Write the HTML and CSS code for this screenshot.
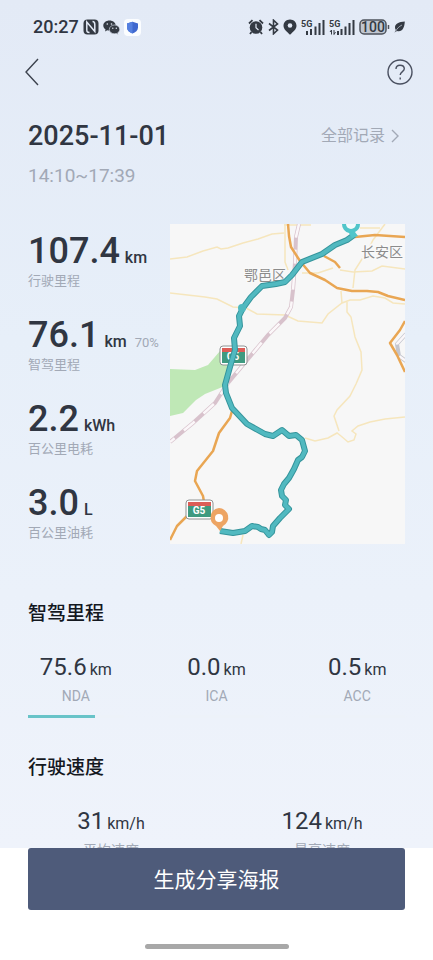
FILE: index.html
```html
<!DOCTYPE html>
<html lang="zh-CN">

<head>
    <meta charset="UTF-8">
    <meta name="viewport" content="width=device-width, initial-scale=1.0">
    <title>行驶记录</title>
    <link rel="stylesheet" href="styles.css">
</head>

<body>
    <main class="page">
        <div class="status-bar">
            <div class="status-left">
                <span class="clock">20:27</span>
                <svg class="nfc" width="16" height="16" viewBox="0 0 16 16">
                    <rect x="0.5" y="0.5" width="15" height="15" rx="4" fill="#343a43" />
                    <path d="M6.500 13.500C4 13.500 3.800 12.500 3.800 10.500V3L11.800 12.500V5.500C11.800 3.500 11.500 2.500 9.500 2.500" fill="none" stroke="#e3eaf6" stroke-width="1.500" />
                </svg>
                <svg class="wechat" width="17" height="15" viewBox="0 0 17 15">
                    <path d="M6.500 0.500C3 0.500 0.300 2.700 0.300 5.500c0 1.600 0.900 3 2.300 3.900L2 11.500l2.300-1.200c0.700 0.200 1.500 0.300 2.200 0.300C10 10.600 12.700 8.300 12.700 5.500S10 0.500 6.500 0.500z" fill="#343a43" />
                    <path d="M11.500 5C8.600 5 6.300 7 6.300 9.400s2.300 4.400 5.200 4.400c0.600 0 1.200-0.100 1.800-0.300l1.900 1-0.500-1.700c1.200-0.800 2-2 2-3.400C16.700 7 14.400 5 11.500 5z" fill="#343a43" stroke="#e3eaf6" stroke-width="0.600" />
                    <g fill="#e3eaf6">
                        <circle cx="4.300" cy="4" r="0.800" />
                        <circle cx="8.500" cy="4" r="0.800" />
                        <circle cx="9.800" cy="8.200" r="0.700" />
                        <circle cx="13.300" cy="8.200" r="0.700" />
                    </g>
                </svg>
                <svg class="shield" width="17" height="17" viewBox="0 0 17 17">
                    <rect width="17" height="17" rx="4" fill="#fbfdff" />
                    <path d="M8.500 2.800L14 4.500V8.500C14 11.500 11.500 13.500 8.500 14.500C5.500 13.500 3 11.500 3 8.500V4.500z" fill="#3f68cf" />
                    <path d="M8.500 2.800V14.500C5.500 13.500 3 11.500 3 8.500V4.500z" fill="#5580e0" />
                </svg>
            </div>
            <div class="status-right">
                <svg width="16" height="16" viewBox="0 0 16 16">
                    <circle cx="8" cy="8.500" r="6.300" fill="#343a43" />
                    <path d="M1 4.500L4.500 1.200M11.500 1.200L15 4.500M3.500 13L2 15M12.500 13L14 15" stroke="#343a43" stroke-width="1.800" />
                    <path d="M8 4.800V8.800L10.500 11" fill="none" stroke="#e3eaf6" stroke-width="1.200" />
                </svg>
                <svg width="11" height="16" viewBox="0 0 11 16">
                    <path d="M1 4.500L9.500 11L5.500 14.800V1.200L9.500 5L1 11.500" fill="none" stroke="#343a43" stroke-width="1.600" />
                </svg>
                <svg width="14" height="16" viewBox="0 0 14 16">
                    <path d="M7 0.500C3.200 0.500 0.500 3.300 0.500 6.700C0.500 10.500 4 12.500 7 15.800C10 12.500 13.500 10.500 13.500 6.700C13.500 3.300 10.800 0.500 7 0.500z" fill="#343a43" />
                    <circle cx="7" cy="6.500" r="2.300" fill="#e3eaf6" />
                </svg>
                <svg class="signal" width="24" height="17" viewBox="0 0 24 17">
                    <text x="0" y="8">5G</text>
                    <path d="M6 16V12M10 16V10M14.500 16V7.500M18.500 16V4M22.500 16V1" />
                </svg>
                <svg class="signal" width="26" height="17" viewBox="0 0 26 17">
                    <text x="0" y="8">5G</text>
                    <path d="M9 16V12M12.500 16V10M16.500 16V7.500M20.500 16V4M24.500 16V1" />
                    <path class="data" d="M2.500 15.500V11L1 13M5 11V15.500L6.500 13" />
                </svg>
                <svg class="battery" width="31" height="16" viewBox="0 0 31 16">
                    <rect x="1" y="1" width="26" height="14" rx="4" fill="#c0c6d0" stroke="#4d535c" stroke-width="1.500" />
                    <path d="M29.500 6V10" stroke="#4d535c" stroke-width="1.500" />
                    <text x="14" y="13" text-anchor="middle">100</text>
                </svg>
                <svg class="leaf" width="11" height="12" viewBox="0 0 11 12">
                    <path d="M10.800 0.500C5 1 1 2.500 1 6.500C1 7.500 1.300 8.300 1.800 9L0.500 11.500L3 10C8 11.500 10.500 7 10.800 0.500z" fill="#343a43" />
                    <path d="M1.500 10.500C3 7.500 5 5.500 8 4" fill="none" stroke="#e3eaf6" stroke-width="0.600" />
                </svg>
            </div>
        </div>

        <nav class="nav">
            <button class="icon-btn" aria-label="返回">
                <svg width="14" height="28" viewBox="0 0 14 28">
                    <path d="M13 1L1 14L13 27" fill="none" stroke="#3c424d" stroke-width="1.400" />
                </svg>
            </button>
            <button class="icon-btn" aria-label="帮助">
                <svg width="26" height="26" viewBox="0 0 26 26" fill="none" stroke="#4a5060" stroke-width="1.400">
                    <circle cx="13" cy="13" r="12" />
                    <path d="M9 10C9 7.500 10.700 6.200 13 6.200S17.300 7.600 17.300 9.800C17.300 12.700 13.200 12.500 13.200 16" />
                    <path d="M13.200 18.500V20.500" />
                </svg>
            </button>
        </nav>

        <header class="trip-header">
            <div class="trip-title">
                <h1>2025-11-01</h1>
                <a href="#" class="all-records">全部记录
                    <svg width="8" height="14" viewBox="0 0 8 14">
                        <path d="M1 1L7 7L1 13" fill="none" stroke="#a2a9b6" stroke-width="1.400" />
                    </svg>
                </a>
            </div>
            <p class="trip-time">14:10~17:39</p>
        </header>

        <section class="summary">
            <div class="stats">
                <div class="stat">
                    <p class="stat-value"><b>107.4</b><span>km</span></p>
                    <p class="stat-label">行驶里程</p>
                </div>
                <div class="stat">
                    <p class="stat-value"><b>76.1</b><span>km</span><small>70%</small></p>
                    <p class="stat-label">智驾里程</p>
                </div>
                <div class="stat">
                    <p class="stat-value"><b>2.2</b><span>kWh</span></p>
                    <p class="stat-label">百公里电耗</p>
                </div>
                <div class="stat">
                    <p class="stat-value"><b>3.0</b><span>L</span></p>
                    <p class="stat-label">百公里油耗</p>
                </div>
            </div>

            <svg class="map" viewBox="170 224 235 320">
                <rect x="170" y="224" width="235" height="320" fill="#f7f7f7" />
                <path class="park" d="M170 369L195 370L208 365L220 351L230 351L229 367L225 386L205 394L196 400L188 408L183 413L170 416z" />

                <!-- minor roads -->
                <g class="road-minor">
                    <path d="M170 259L187 257L203 251L217 247L221 249L228 248L243 243L258 239L272 234L284 233" />
                    <path d="M170 293L205 297L217 299L233 307L246 308L257 314L285 315L298 321L322 323L328 314L342 303L350 300L360 300L373 296L385 298L393 303L405 304" />
                    <path d="M285 224V262L288 270M284 225H311" />
                    <path d="M302 273L318 273L333 268" />
                    <path d="M340 270L353 272L372 271L382 266L405 269" />
                    <path d="M385 224L373 240L369 248L355 270L353 288M360 228H380" />
                    <path d="M341 291L342 303M347 302L347 312L351 317L355 337L361 352L362 370L356 384L350 396L337 410L334 416L339 431" />
                    <path d="M305 438L315 441L328 438L337 433L341 436L348 442L354 440L356 434L352 431L358 426L370 422L385 419L405 417" />
                    <path d="M243 535L241 544" />
                </g>

                <!-- railways -->
                <g class="rail">
                    <path d="M299 224L296 237L295 263L293 290L291 307L285 318L268 335L228 383L215 403L193 423L170 442" />
                    <path class="rail-gap" d="M299 224L296 237L295 263L293 290L291 307L285 318L268 335L228 383L215 403L193 423L170 442" />
                </g>
                <g class="rail rail-gray">
                    <path d="M406 334L397 344L399 356L406 361" />
                    <path class="rail-gap" d="M406 334L397 344L399 356L406 361" />
                </g>

                <g class="road-major">
                    <path d="M288 224L289 236L291 247L300 261L310 273L325 280L337 288L352 291L367 291L378 292L388 296L405 300" />
                    <path d="M355 237L375 235L405 237" />
                    <path d="M324 256L335 262L340 268" />
                    <path d="M405 321L400 330L390 343L397 355L405 372" />
                    <path d="M232 411L230 418L219 433L213 451L197 471L195 481L203 496L204 502M188 515L177 526L170 540" />
                </g>

                <text class="place" x="244" y="280">鄂邑区</text>
                <text class="place" x="361" y="257">长安区</text>

                <g class="shield-sign">
                    <rect class="sign-edge" x="220" y="346" width="27" height="19" rx="3" />
                    <rect x="222" y="348" width="23" height="15" fill="#3f9a80" />
                    <rect x="222" y="348" width="23" height="4" fill="#dc5d57" />
                    <text x="233" y="360">G5</text>
                </g>
                <g class="shield-sign">
                    <rect class="sign-edge" x="186" y="500" width="27" height="19" rx="3" />
                    <rect x="188" y="502" width="23" height="15" fill="#3f9a80" />
                    <rect x="188" y="502" width="23" height="4" fill="#dc5d57" />
                    <text x="199" y="514">G5</text>
                </g>

                <!-- driven route -->
                <g class="route">
                    <path class="route-edge" d="M354 235L347 240L335 245L322 254L302 262L292 275L285 282L276 284L262 286L251 297L243 308L239 316L240 326L234 338L235 350L230 367L225 385L226 393L232 408L247 424L265 434L273 436L282 430L289 436L296 435L302 440L305 451L302 457L298 460L294 469L289 478L284 484L281 490L282 496L286 500L285 505L289 509L280 518L273 526L272 532L269 535L265 530L261 529L258 527L252 526L245 531L233 533L220 531" />
                    <path class="route-fill" d="M354 235L347 240L335 245L322 254L302 262L292 275L285 282L276 284L262 286L251 297L243 308L239 316L240 326L234 338L235 350L230 367L225 385L226 393L232 408L247 424L265 434L273 436L282 430L289 436L296 435L302 440L305 451L302 457L298 460L294 469L289 478L284 484L281 490L282 496L286 500L285 505L289 509L280 518L273 526L272 532L269 535L265 530L261 529L258 527L252 526L245 531L233 533L220 531" />
                    <circle cx="242" cy="308" r="4" fill="#4fb9bf" />
                </g>

                <path d="M219 508a9.500 9.500 0 0 1 4 18L220 531L216 526a9.500 9.500 0 0 1 3-18z" fill="#eda463" />
                <circle cx="219" cy="518" r="4" fill="#fff" />
                <path d="M342 224a9 9 0 0 0 7 9L352 238L358 236L355 232a9 9 0 0 0 5-8z" fill="#50c5ca" />
                <circle cx="351" cy="224" r="5" fill="#f4fbfb" />
            </svg>
        </section>

        <section class="block">
            <h2>智驾里程</h2>
            <div class="metrics">
                <div class="metric">
                    <p class="metric-value">75.6<span>km</span></p>
                    <p class="metric-label">NDA</p>
                    <div class="bar"><div class="bar-fill" style="width: 70%"></div></div>
                </div>
                <div class="metric">
                    <p class="metric-value">0.0<span>km</span></p>
                    <p class="metric-label">ICA</p>
                    <div class="bar"></div>
                </div>
                <div class="metric">
                    <p class="metric-value">0.5<span>km</span></p>
                    <p class="metric-label">ACC</p>
                    <div class="bar"></div>
                </div>
            </div>
        </section>

        <section class="block">
            <h2>行驶速度</h2>
            <div class="metrics">
                <div class="metric">
                    <p class="metric-value">31<span>km/h</span></p>
                    <p class="metric-label">平均速度</p>
                </div>
                <div class="metric">
                    <p class="metric-value">124<span>km/h</span></p>
                    <p class="metric-label">最高速度</p>
                </div>
            </div>
        </section>
    </main>

    <footer class="footer">
        <button class="share-btn">生成分享海报</button>
        <div class="home-bar"></div>
    </footer>
</body>

</html>
```
FILE: styles.css
```css
* {
    padding: 0;
    margin: 0;
    box-sizing: border-box;
}

body {
    display: flex;
    flex-direction: column;
    height: 100vh;
    font-family: Roboto, "Noto Sans CJK SC", sans-serif;
    color: #303642;
    background-color: #fff;
}

svg {
    display: block;
    flex-shrink: 0;
}

button {
    border: 0;
    background: none;
    cursor: pointer;
    font-family: inherit;
}

.page {
    flex: 1;
    min-height: 0;
    overflow: hidden;
    padding: 0 28px;
    background: linear-gradient(#e3eaf6, #e7eff9 40%, #eff3fb);
}

/* status bar */

.status-bar {
    display: flex;
    justify-content: space-between;
    align-items: center;
    height: 54px;
    padding-left: 5px;
}

.status-left,
.status-right {
    display: flex;
    align-items: center;
    gap: 4px;
}

.clock {
    font-size: 18px;
    font-weight: 500;
    line-height: 20px;
}

.signal text {
    font-size: 9px;
    font-weight: 700;
    fill: #343a43;
}

.signal path {
    fill: none;
    stroke: #343a43;
    stroke-width: 2;
}

.signal .data {
    stroke-width: 1;
}

.battery text {
    font-size: 14px;
    font-weight: 500;
    fill: #343a43;
}

/* top navigation */

.nav {
    display: flex;
    justify-content: space-between;
    align-items: center;
    height: 36px;
    margin: 0 -9px 0 -4px;
}

.icon-btn {
    display: flex;
    align-items: center;
    justify-content: center;
    height: 36px;
    padding: 0 1px;
}

.trip-header {
    padding-top: 30px;
}

.trip-title {
    display: flex;
    justify-content: space-between;
    align-items: center;
}

.trip-title h1 {
    font-size: 27px;
    font-weight: 500;
    line-height: 32px;
}

.all-records {
    display: flex;
    align-items: center;
    gap: 6px;
    padding-right: 6px;
    font-size: 16px;
    line-height: 24px;
    color: #a2a9b6;
    text-decoration: none;
}

.trip-time {
    margin-top: 12px;
    font-size: 19px;
    line-height: 24px;
    color: #a2a9b6;
}

/* summary and map */

.summary {
    display: flex;
    align-items: flex-start;
    padding-top: 36px;
}

.stats {
    display: flex;
    flex-direction: column;
    gap: 24px;
    width: 142px;
    padding-top: 7px;
}

.stat-value {
    display: flex;
    align-items: baseline;
    white-space: nowrap;
}

.stat-value b {
    font-size: 36px;
    font-weight: 500;
    line-height: 40px;
}

.stat-value span {
    margin-left: 5px;
    font-size: 16px;
    font-weight: 500;
    line-height: 20px;
}

.stat-value small {
    margin-left: 8px;
    font-size: 13px;
    line-height: 20px;
    color: #a2a9b6;
}

.stat-label {
    font-size: 13px;
    line-height: 20px;
    color: #a2a9b6;
}

.map {
    flex: 1;
    min-width: 0;
}

.park {
    fill: #bfe8b6;
}

.road-minor path {
    fill: none;
    stroke: #f6e6bd;
    stroke-width: 1.5;
}

.road-major path {
    fill: none;
    stroke: #e9a653;
    stroke-width: 2.5;
    stroke-linejoin: round;
}

.rail path {
    fill: none;
    stroke: #d8c2cc;
    stroke-width: 4;
}

.rail .rail-gap {
    stroke: #fbf7f9;
    stroke-width: 2.5;
    stroke-dasharray: 14 12;
}

.rail-gray path {
    stroke: #c3c5ce;
}

.place {
    font-size: 14px;
    fill: #8b8b8b;
    stroke: #f9f9f9;
    stroke-width: 3;
    paint-order: stroke;
}

.sign-edge {
    fill: #fff;
    stroke: #8f9292;
    stroke-width: 1;
}

.shield-sign text {
    font-size: 10px;
    font-weight: 700;
    text-anchor: middle;
    fill: #fff;
}

.route path {
    fill: none;
    stroke-linejoin: round;
}

.route .route-edge {
    stroke: #34949b;
    stroke-width: 6;
}

.route .route-fill {
    stroke: #51b9c0;
    stroke-width: 4;
}

/* metric blocks */

.block {
    padding-top: 36px;
}

.summary + .block {
    padding-top: 56px;
}

.block h2 {
    font-size: 19px;
    font-weight: 500;
    line-height: 28px;
    color: #14181f;
}

.metrics {
    display: flex;
    gap: 45px;
    padding-top: 23px;
}

.metric {
    flex: 1;
    text-align: center;
}

.metric-value {
    font-size: 24px;
    line-height: 32px;
    white-space: nowrap;
}

.metric-value span {
    margin-left: 3px;
    font-size: 16px;
    line-height: 16px;
}

.metric-label {
    margin-top: 3px;
    font-size: 14px;
    line-height: 20px;
    color: #a2a9b6;
}

.bar {
    height: 3px;
    margin-top: 9px;
    background-color: #edf2f9;
}

.bar-fill {
    height: 100%;
    background-color: #68c3c8;
}

/* bottom action */

.footer {
    padding: 0 28px 11px;
    background-color: #fff;
}

.share-btn {
    display: block;
    width: 100%;
    height: 62px;
    padding-bottom: 3px;
    border-radius: 3px;
    font-size: 21px;
    color: #fff;
    background-color: #4e5b7a;
}

.home-bar {
    width: 144px;
    height: 5px;
    margin: 34px auto 0;
    border-radius: 3px;
    background-color: #a8a8a8;
}
```
